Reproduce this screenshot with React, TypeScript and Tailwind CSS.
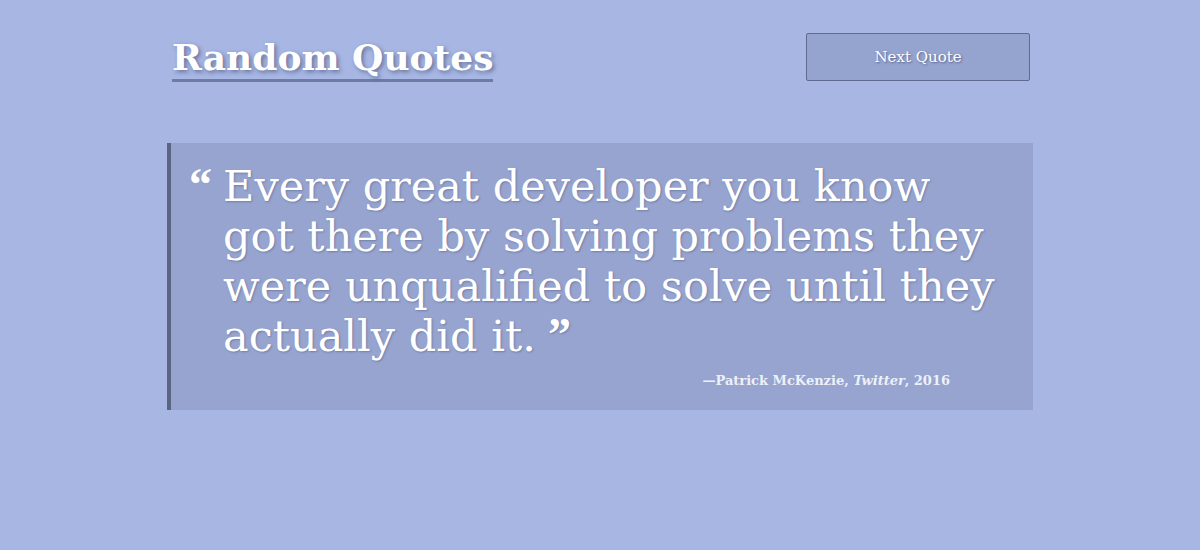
export default function App() {
  return (
    <div className="w-full h-[550px] bg-[#a7b6e3] font-['DejaVu_Serif',serif] text-white">
      <div className="w-[866px] mx-auto pt-[33px]">
        <header className="flex items-start justify-between">
          <h1 className="ml-[5px] mt-[3px] pb-[1px] text-[36px] leading-[42px] font-bold border-b-[3px] border-[#6f7ba3] [text-shadow:2px_2px_4px_rgba(60,70,110,0.6)]">
            Random Quotes
          </h1>
          <button className="mr-[3px] w-[224px] h-[48px] bg-[#95a3cf] border border-[#5f6a8e] rounded-[2px] text-[15px] text-white [text-shadow:1px_1px_2px_rgba(60,70,110,0.7)]">
            Next Quote
          </button>
        </header>

        <blockquote className="mt-[61px] h-[267px] bg-[#96a4cf] border-l-[4px] border-[#5a6382] pl-[18px] pr-[20px] pt-[18px]">
          <div className="flex">
            <span className="w-[34px] shrink-0 pt-[4px] font-['Liberation_Serif',serif] text-[46px] leading-[40px] font-bold">“</span>
            <p className="text-[43px] leading-[50px] [text-shadow:1px_1px_2px_rgba(60,70,110,0.4)]">
              Every great developer you know got there by solving problems they were unqualified to solve until they actually did it.
              <span className="inline-block ml-[12px] align-top pt-[6px] font-['Liberation_Serif',serif] text-[46px] leading-[36px] font-bold">”</span>
            </p>
          </div>
          <footer className="mt-[10px] pr-[63px] text-right text-[13px] font-bold text-[#eef0f8]">
            —Patrick McKenzie, <cite className="italic">Twitter</cite>, 2016
          </footer>
        </blockquote>
      </div>
    </div>
  );
}
